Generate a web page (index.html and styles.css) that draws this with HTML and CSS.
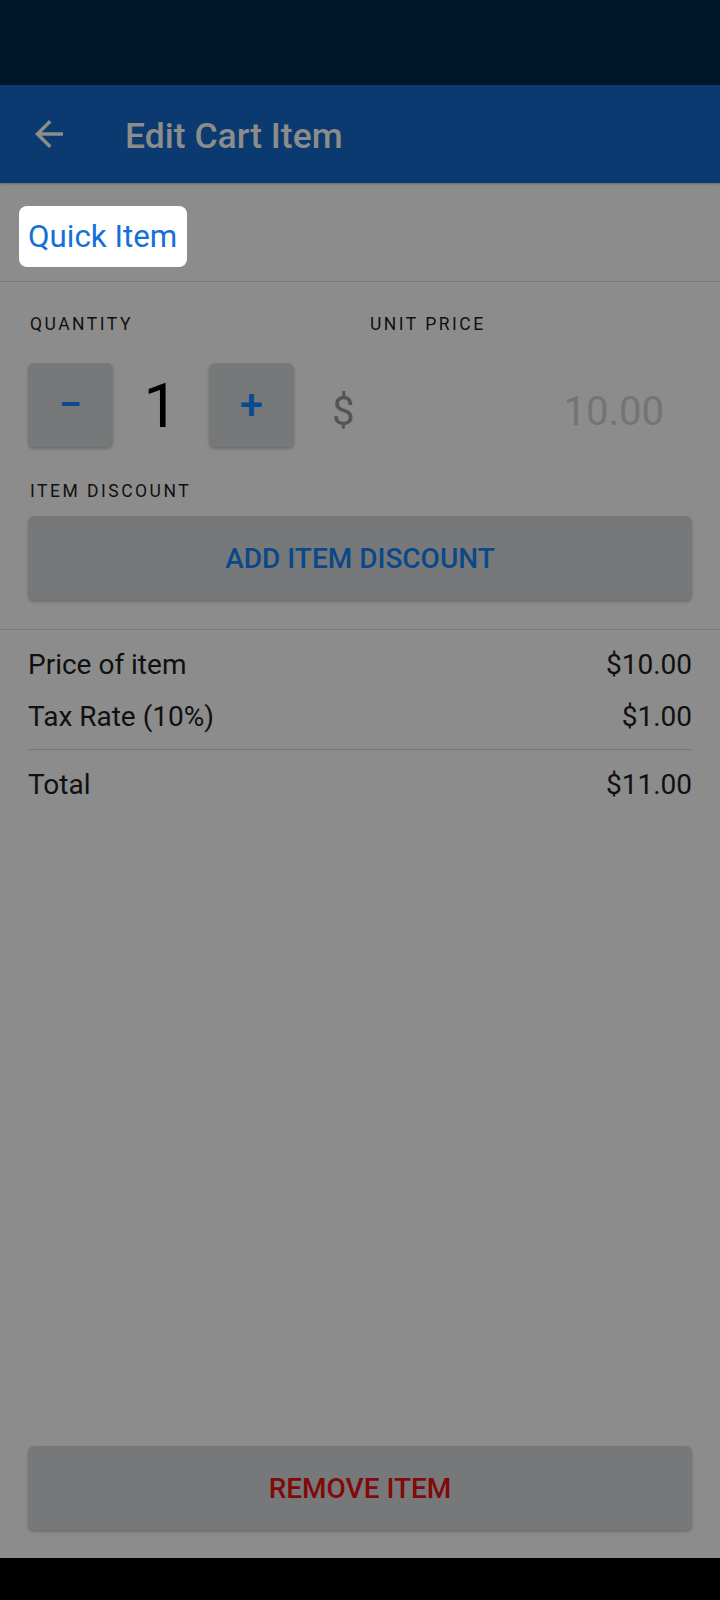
FILE: index.html
```html
<!DOCTYPE html>
<html lang="en">
<head>
<meta charset="utf-8">
<title>Edit Cart Item</title>
<link rel="stylesheet" href="styles.css">
</head>
<body>
<div class="screen">
  <div class="status-bar"></div>
  <header class="app-bar">
    <svg class="back" viewBox="0 0 24 24" aria-hidden="true"><path d="M20 11H7.83l5.59-5.59L12 4l-8 8 8 8 1.41-1.41L7.83 13H20v-2z"/></svg>
    <h1 class="title">Edit Cart Item</h1>
  </header>
  <main class="content">
    <section class="item-name">
      <div class="spotlight">Quick Item</div>
    </section>
    <section class="editor">
      <div class="labels">
        <span class="label">QUANTITY</span>
        <span class="label">UNIT PRICE</span>
      </div>
      <div class="controls">
        <button class="step">−</button>
        <span class="qty">1</span>
        <button class="step">+</button>
        <span class="currency">$</span>
        <span class="price">10.00</span>
      </div>
      <div class="label discount-label">ITEM DISCOUNT</div>
      <button class="wide-btn discount">ADD ITEM DISCOUNT</button>
    </section>
    <section class="totals">
      <div class="row"><span>Price of item</span><span>$10.00</span></div>
      <div class="row"><span>Tax Rate (10%)</span><span>$1.00</span></div>
      <div class="rule"></div>
      <div class="row total"><span>Total</span><span>$11.00</span></div>
    </section>
    <div class="spacer"></div>
    <section class="footer">
      <button class="wide-btn remove">REMOVE ITEM</button>
    </section>
  </main>
  <div class="nav-bar"></div>
</div>
</body>
</html>
```

FILE: styles.css
```css
html, body {
  margin: 0;
  padding: 0;
}
body {
  font-family: Roboto, "Noto Sans", "Liberation Sans", sans-serif;
  background: #000;
}
.screen {
  width: 720px;
  height: 1600px;
  display: flex;
  flex-direction: column;
  background: #8c8c8c;
}
.status-bar {
  height: 85px;
  background: #00162a;
  flex: none;
}
.app-bar {
  height: 98px;
  flex: none;
  background: #0a3a6f;
  display: flex;
  align-items: center;
  box-shadow: 0 1px 2px rgba(0,0,0,0.25);
  position: relative;
  z-index: 1;
}
.back {
  width: 42px;
  height: 42px;
  margin-left: 28px;
  fill: #8c8c8c;
  flex: none;
}
.title {
  margin: 4px 0 0 55px;
  font-size: 35.5px;
  font-weight: 500;
  color: #8c8c8c;
  line-height: 40px;
}
.content {
  flex: 1;
  display: flex;
  flex-direction: column;
}
.item-name {
  height: 99px;
  box-sizing: border-box;
  padding: 23px 0 0 19px;
  border-bottom: 1px solid #7a7a7a;
}
.spotlight {
  display: inline-block;
  height: 61px;
  line-height: 61px;
  padding: 0 10px 0 9px;
  background: #ffffff;
  border-radius: 8px;
  font-size: 31.3px;
  color: #1470d6;
}
.editor {
  padding: 32px 28px 29px 28px;
  border-bottom: 1px solid #7a7a7a;
}
.labels {
  display: grid;
  grid-template-columns: 340px 1fr;
  padding-left: 2px;
}
.label {
  font-size: 17.5px;
  line-height: 20px;
  letter-spacing: 2.5px;
  color: #101010;
}
.controls {
  margin-top: 29px;
  height: 84px;
  display: flex;
  align-items: center;
}
.step {
  width: 85px;
  height: 84px;
  border: none;
  border-radius: 6px;
  background: #77787a;
  box-shadow: 0 2px 3px rgba(0,0,0,0.22);
  color: #0a4a8f;
  font-family: Roboto, "Noto Sans", sans-serif;
  font-size: 42px;
  font-weight: 500;
  line-height: 44px;
  padding: 0;
  flex: none;
}
.qty {
  width: 96px;
  text-align: center;
  font-size: 62px;
  line-height: 62px;
  color: #000;
  align-self: flex-start;
  margin-top: 12px;
}
.currency, .price {
  font-size: 40px;
  line-height: 40px;
  align-self: flex-start;
  margin-top: 29px;
}
.currency {
  margin-left: 38px;
  color: #545454;
}
.price {
  flex: 1;
  text-align: right;
  padding-right: 28px;
  color: #747474;
}
.discount-label {
  margin-top: 34px;
  padding-left: 2px;
}
.wide-btn {
  display: block;
  width: 100%;
  height: 84px;
  border: none;
  border-radius: 6px;
  background: #77787a;
  box-shadow: 0 2px 3px rgba(0,0,0,0.22);
  font-family: Roboto, "Noto Sans", sans-serif;
  font-size: 28px;
  font-weight: 500;
  padding: 0;
}
.discount {
  margin-top: 15px;
  color: #0a4888;
}
.remove {
  color: #800a0a;
}
.totals {
  padding: 9px 28px 0 28px;
}
.row {
  display: flex;
  justify-content: space-between;
  font-size: 28px;
  line-height: 52px;
  color: #101010;
}
.rule {
  height: 1px;
  background: #777777;
  margin: 6px 0 9px 0;
}
.spacer {
  flex: 1;
}
.footer {
  padding: 0 28px 28px 28px;
}
.nav-bar {
  height: 42px;
  flex: none;
  background: #000;
}
```
